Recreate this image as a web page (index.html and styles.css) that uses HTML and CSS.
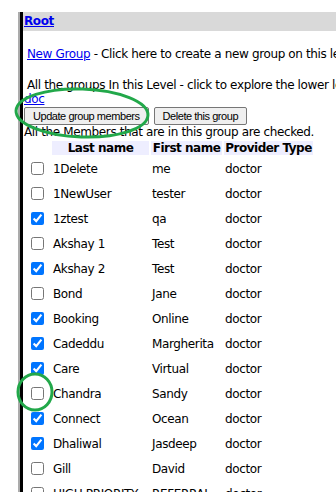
FILE: index.html
```html
<!doctype html>
<html>
<head>
  <title>Group members</title>
  <link rel="stylesheet" href="styles.css">
</head>
<body>
  <div class="rail">
    <div class="frame">
      <div class="crumb"><a href="#">Root</a></div>
      <p class="line"><a href="#">New Group</a> - Click here to create a new group on this level</p>
      <p class="line">All the groups In this Level - click to explore the lower levels</p>
      <a class="doc" href="#">doc</a>
      <div class="actions">
        <button>Update group members</button>
        <button>Delete this group</button>
      </div>
      <div class="note">All the Members that are in this group are checked.</div>
      <table id="members">
        <tr>
          <th class="blank"></th>
          <th class="c-last">Last name</th>
          <th class="c-first">First name</th>
          <th class="c-type">Provider Type</th>
        </tr>
      </table>
    </div>
  </div>

  <svg class="marks" width="336" height="492" viewBox="0 0 336 492">
    <ellipse cx="82" cy="113" rx="66" ry="24" transform="rotate(2 82 113)" />
    <ellipse cx="35" cy="392" rx="17" ry="18" />
  </svg>

  <script>
    var members = [
      ['1Delete', 'me', false],
      ['1NewUser', 'tester', false],
      ['1ztest', 'qa', true],
      ['Akshay 1', 'Test', false],
      ['Akshay 2', 'Test', true],
      ['Bond', 'Jane', false],
      ['Booking', 'Online', true],
      ['Cadeddu', 'Margherita', true],
      ['Care', 'Virtual', true],
      ['Chandra', 'Sandy', false],
      ['Connect', 'Ocean', true],
      ['Dhaliwal', 'Jasdeep', true],
      ['Gill', 'David', false],
      ['HIGH PRIORITY', 'REFERRAL', false]
    ]

    var table = document.getElementById('members')
    for (var m of members) {
      var tr = document.createElement('tr')
      var box = document.createElement('td')
      box.className = 'pick'
      var input = document.createElement('input')
      input.type = 'checkbox'
      input.checked = m[2]
      box.appendChild(input)
      tr.appendChild(box)
      for (var text of [m[0], m[1], 'doctor']) {
        var td = document.createElement('td')
        td.textContent = text
        tr.appendChild(td)
      }
      table.appendChild(tr)
    }
  </script>
</body>
</html>
```

FILE: styles.css
```css
html, body {
  margin: 0;
  height: 100%;
  overflow: hidden;
}

body {
  font-family: "DejaVu Sans", Verdana, sans-serif;
  font-size: 12px;
  letter-spacing: -0.37px;
  color: #000;
  white-space: nowrap;
}

a { color: #0000ee; }

.rail {
  margin-left: 18px;
  height: 100%;
  border-left: 2px solid #ababab;
}
.frame {
  height: 100%;
  border-left: 3px solid #000;
}

.crumb {
  margin-top: 12px;
  height: 19px;
  line-height: 19px;
  padding-left: 1px;
  background: #d9d9d9;
  font-weight: bold;
}

.line {
  margin: 16px 0 0;
  padding-left: 4px;
  line-height: 14px;
}
.line + .line { margin-top: 17px; }

.doc {
  display: block;
  margin-top: 1px;
  padding-left: 1px;
  line-height: 13px;
}

.actions {
  padding-left: 1px;
  margin-top: 1px;
  display: flex;
  gap: 5px;
}
.actions button {
  font-family: "Liberation Sans", Tahoma, sans-serif;
  font-size: 11px;
  letter-spacing: -0.45px;
  height: 18px;
  padding: 0 8px;
  border: 1px solid #767676;
  border-radius: 2px;
  background: #efefef;
  color: #000;
}

.note {
  padding-left: 1px;
  line-height: 14px;
}

#members {
  margin-left: 1px;
  border-spacing: 2px;
}
#members th {
  background: #eeeeff;
  padding: 0 1px;
  height: 14px;
  line-height: 14px;
  letter-spacing: -0.5px;
}
#members th.blank { background: none; }
#members td {
  height: 23px;
  padding: 0 1px;
}
#members td.pick { width: 22px; }
#members input {
  margin: 3px 3px 3px 4px;
  vertical-align: middle;
}
.c-last { width: 95px; }
.c-first { width: 69px; }
.c-type { width: 87px; }

.marks {
  position: absolute;
  left: 0;
  top: 0;
  pointer-events: none;
}
.marks ellipse {
  fill: none;
  stroke: #22a84a;
  stroke-width: 3;
}
```
